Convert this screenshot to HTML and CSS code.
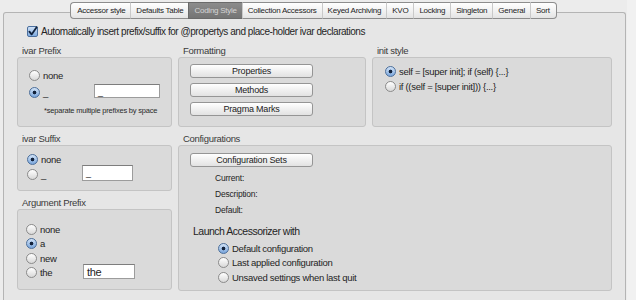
FILE: index.html
```html
<!DOCTYPE html>
<html lang="en">
<head>
    <meta charset="UTF-8">
    <title>Accessorizer Preferences</title>
    <link rel="stylesheet" href="styles.css">
</head>
<body>
    <div class="window">
        <div class="tabs">
            <span class="tab">Accessor style</span>
            <span class="tab">Defaults Table</span>
            <span class="tab selected">Coding Style</span>
            <span class="tab">Collection Accessors</span>
            <span class="tab">Keyed Archiving</span>
            <span class="tab">KVO</span>
            <span class="tab">Locking</span>
            <span class="tab">Singleton</span>
            <span class="tab">General</span>
            <span class="tab">Sort</span>
        </div>

        <div class="tabview">
            <div class="check-row">
                <span class="checkbox">
                    <svg viewBox="0 0 11 11" width="11" height="11"><path d="M2.4 5.6 L4.6 8.4 L9.6 1.2" fill="none" stroke="#10223d" stroke-width="1.8" stroke-linecap="round" stroke-linejoin="round"/></svg>
                </span>
                Automatically insert prefix/suffix for @propertys and place-holder ivar declarations
            </div>

            <div class="grid">
                <!-- ivar prefix -->
                <section class="group">
                    <div class="group-title">ivar Prefix</div>
                    <div class="box box-prefix">
                        <div class="opt"><span class="radio"></span><span class="opt-label">none</span></div>
                        <div class="opt">
                            <span class="radio on"></span><span class="opt-label w-prefix">_</span>
                            <span class="field">_</span>
                        </div>
                        <div class="note">*separate multiple prefixes by space</div>
                    </div>
                </section>

                <!-- formatting -->
                <section class="group">
                    <div class="group-title">Formatting</div>
                    <div class="box box-format">
                        <div class="btn">Properties</div>
                        <div class="btn">Methods</div>
                        <div class="btn">Pragma Marks</div>
                    </div>
                </section>

                <!-- init style -->
                <section class="group">
                    <div class="group-title">init style</div>
                    <div class="box box-init">
                        <div class="opt"><span class="radio on"></span><span class="opt-label">self = [super init]; if (self) {...}</span></div>
                        <div class="opt"><span class="radio"></span><span class="opt-label">if ((self = [super init])) {...}</span></div>
                    </div>
                </section>

                <div class="left-stack">
                    <section class="group">
                        <div class="group-title">ivar Suffix</div>
                        <div class="box box-suffix">
                            <div class="opt"><span class="radio on"></span><span class="opt-label">none</span></div>
                            <div class="opt">
                                <span class="radio"></span><span class="opt-label w-suffix">_</span>
                                <span class="field field-sm">_</span>
                            </div>
                        </div>
                    </section>

                    <section class="group">
                        <div class="group-title">Argument Prefix</div>
                        <div class="box box-arg">
                            <div class="opt"><span class="radio"></span><span class="opt-label">none</span></div>
                            <div class="opt"><span class="radio on"></span><span class="opt-label">a</span></div>
                            <div class="opt"><span class="radio"></span><span class="opt-label">new</span></div>
                            <div class="opt">
                                <span class="radio"></span><span class="opt-label w-arg">the</span>
                                <span class="field field-big">the</span>
                            </div>
                        </div>
                    </section>
                </div>

                <!-- configurations -->
                <section class="group span-2">
                    <div class="group-title">Configurations</div>
                    <div class="box box-config">
                        <div class="btn">Configuration Sets</div>
                        <div class="info">
                            <div>Current:</div>
                            <div>Description:</div>
                            <div>Default:</div>
                        </div>
                        <div class="launch-title">Launch Accessorizer with</div>
                        <div class="launch-opts">
                            <div class="opt"><span class="radio on"></span><span class="opt-label">Default configuration</span></div>
                            <div class="opt"><span class="radio"></span><span class="opt-label">Last applied configuration</span></div>
                            <div class="opt"><span class="radio"></span><span class="opt-label">Unsaved settings when last quit</span></div>
                        </div>
                    </div>
                </section>
            </div>
        </div>
    </div>
</body>
</html>
```

FILE: styles.css
```css
:root {
    --text: #242424;
    --label: #3a3a3a;
    --window-bg: #ececec;
    --pane-bg: #e6e6e6;
    --box-bg: #dadada;
    --box-border: #c4c4c4;
}

body {
    margin: 0;
    background: #f1f1f1;
    font-family: "Liberation Sans", Arial, sans-serif;
    color: var(--text);
    width: 636px;
    height: 300px;
    overflow: hidden;
}

.window {
    width: 627px;
    height: 300px;
    background: var(--window-bg);
    padding-top: 2px;
    box-sizing: border-box;
    overflow: hidden;
}

/* segmented tab bar */
.tabs {
    display: flex;
    justify-content: center;
    margin-bottom: -7px;
    position: relative;
    z-index: 1;
}

.tab {
    height: 15px;
    line-height: 15px;
    padding: 0 5px;
    font-size: 8px;
    letter-spacing: -0.25px;
    color: #222;
    background: linear-gradient(#ffffff, #f1f1f1 55%, #e4e4e4);
    border-top: 1px solid #8d8d8d;
    border-bottom: 1px solid #8d8d8d;
    border-left: 1px solid #c9c9c9;
}

.tab:first-child {
    border-left: 1px solid #8d8d8d;
    border-radius: 4px 0 0 4px;
    padding-left: 6px;
}

.tab:last-child {
    border-right: 1px solid #8d8d8d;
    border-radius: 0 4px 4px 0;
    padding-right: 6px;
}

.tab.selected {
    background: linear-gradient(#8c8c8c, #747474);
    color: #d4d4d4;
    border-color: #6a6a6a;
}

.tabview {
    margin-left: 3px;
    width: 623px;
    height: 288px;
    background: var(--pane-bg);
    border: 1px solid #b4b4b4;
    border-bottom: none;
    border-radius: 3px 3px 0 0;
    padding: 12px 0 0 13px;
    box-sizing: border-box;
}

.check-row {
    display: flex;
    align-items: center;
    gap: 3px;
    height: 12px;
    margin: 0 0 8px 10px;
    font-size: 10px;
    letter-spacing: -0.45px;
}

.checkbox {
    width: 11px;
    height: 11px;
    border: 1px solid #4b6f9e;
    border-radius: 2px;
    background: linear-gradient(#cfe1f6, #7eaadf);
    box-sizing: border-box;
    display: flex;
    align-items: center;
    justify-content: center;
}

.checkbox svg {
    flex: none;
}

.grid {
    display: grid;
    grid-template-columns: 155px 188px 240px;
    column-gap: 6px;
    row-gap: 6px;
    align-items: start;
}

.left-stack {
    display: flex;
    flex-direction: column;
    gap: 6px;
}

.span-2 {
    grid-column: 2 / 4;
}

.group-title {
    height: 12px;
    line-height: 12px;
    padding-left: 5px;
    font-size: 9.5px;
    letter-spacing: -0.3px;
    color: var(--label);
}

.box {
    background: var(--box-bg);
    border: 1px solid var(--box-border);
    border-radius: 3px;
    box-sizing: border-box;
}

.box-prefix { height: 70px; padding: 9px 0 0 11px; }
.box-format { height: 70px; padding: 6px 0 0 11px; display: flex; flex-direction: column; gap: 5px; }
.box-init { height: 70px; padding: 6px 0 0 12px; }
.box-suffix { height: 46px; padding: 6px 0 0 9px; }
.box-arg { height: 81px; padding: 12px 0 0 8px; }
.box-config { height: 146px; padding: 7px 0 0 11px; }

.box-arg .opt { height: 14.5px; }

/* radio rows */
.opt {
    display: flex;
    align-items: center;
    height: 15px;
    font-size: 9.5px;
    letter-spacing: -0.3px;
}

.box-prefix .opt { height: 17px; }

.opt-label {
    margin-left: 3px;
    white-space: nowrap;
}

.w-prefix { width: 51px; }
.w-suffix { width: 41px; }
.w-arg { width: 43px; }

.radio {
    flex: none;
    width: 11px;
    height: 11px;
    border-radius: 50%;
    border: 1px solid #8b8b8b;
    background: linear-gradient(#ffffff, #d8d8d8);
    box-sizing: border-box;
}

.radio.on {
    border-color: #4c6f9b;
    background: radial-gradient(circle, #13233c 0 1.5px, transparent 2.2px),
                linear-gradient(#d2e3f7, #7aa6dc);
}

.field {
    width: 66px;
    height: 14px;
    line-height: 14px;
    padding-left: 3px;
    background: #fff;
    border: 1px solid #9c9c9c;
    border-top-color: #7d7d7d;
    box-sizing: border-box;
    font-size: 9px;
    margin-top: -3px;
}

.field-sm {
    width: 51px;
    height: 16px;
    margin-top: -4px;
}

.field-big {
    width: 52px;
    height: 15px;
    font-size: 11px;
    margin-top: -3px;
}

.note {
    margin: 5px 0 0 15px;
    font-size: 7.5px;
    letter-spacing: -0.2px;
    color: #2a2a2a;
}

/* push buttons */
.btn {
    width: 123px;
    height: 14px;
    line-height: 12px;
    text-align: center;
    font-size: 9px;
    letter-spacing: -0.2px;
    color: #222;
    background: linear-gradient(#ffffff, #f0f0f0 50%, #e2e2e2);
    border: 1px solid #959595;
    border-radius: 3px;
    box-sizing: border-box;
}

.info {
    margin: 3px 0 0 25px;
    font-size: 8.5px;
    letter-spacing: -0.2px;
}

.info div {
    height: 16px;
    line-height: 16px;
}

.launch-title {
    margin: 5px 0 0 3px;
    height: 16px;
    line-height: 16px;
    font-size: 10.5px;
    letter-spacing: -0.5px;
}

.launch-opts {
    margin: 2px 0 0 28px;
}

.launch-opts .opt {
    height: 14.5px;
}
```
